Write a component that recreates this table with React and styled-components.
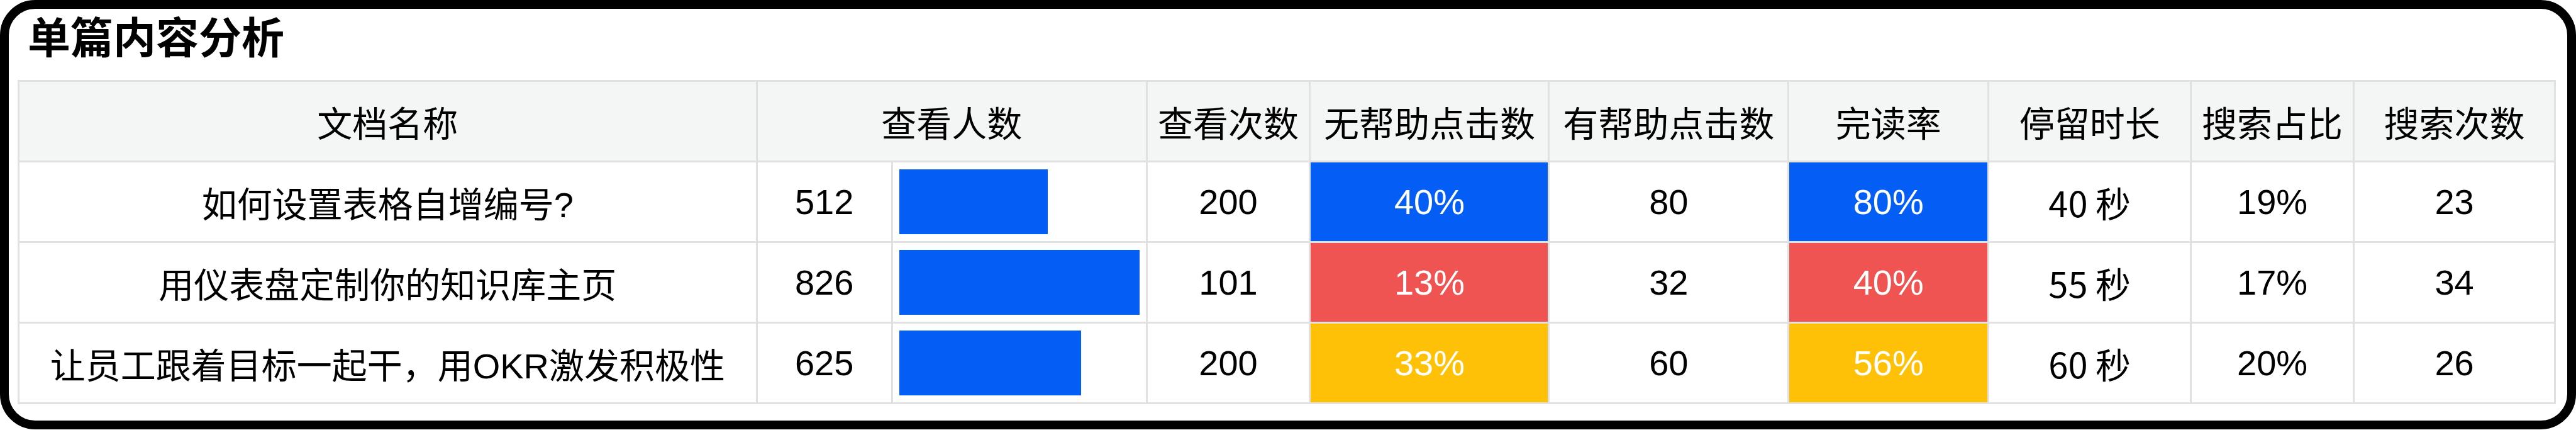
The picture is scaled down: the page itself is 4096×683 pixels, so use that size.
import React from 'react'
import styled, { createGlobalStyle } from 'styled-components'

const GlobalStyle = createGlobalStyle`
  html, body {
    margin: 0;
    padding: 0;
    background: #fff;
  }
  * {
    box-sizing: border-box;
  }
`

const Card = styled.section`
  border: 14px solid #000;
  border-radius: 56px;
  padding: 8px 18px 26px 14px;
  background: #fff;
  color: #000;
  font-family: "Liberation Sans", "Noto Sans CJK SC", sans-serif;
`
const Title = styled.h1`
  margin: 0 0 37px 16px;
  font-family: "Noto Sans CJK SC", sans-serif;
  font-size: 68px;
  line-height: 68px;
  font-weight: 700;
`
const Table = styled.div`
  display: grid;
  grid-template-columns: 1174fr 215fr 405fr 260fr 380fr 381fr 318fr 322fr 259fr 320fr;
  border-top: 3px solid #e1e1e1;
  border-left: 3px solid #e1e1e1;
`
const Cell = styled.div`
  height: 128px;
  display: flex;
  align-items: center;
  justify-content: center;
  border-right: 3px solid #e1e1e1;
  border-bottom: 3px solid #e1e1e1;
  font-size: 56px;
  white-space: nowrap;
  background: ${p => p.$bg || '#fff'};
  color: ${p => (p.$bg ? '#fff' : '#000')};
  font-family: ${p => (p.$cjk ? '"Noto Sans CJK SC", sans-serif' : 'inherit')};
`
const HeadCell = styled(Cell)`
  grid-column: span ${p => p.$span || 1};
  background: #f4f5f5;
  font-family: "Noto Sans CJK SC", sans-serif;
`
const BarCell = styled(Cell)`
  justify-content: flex-start;
  padding: 0 10px;
`
const Bar = styled.div`
  height: 103px;
  background: #045ef5;
`

const BLUE = '#045ef5'
const RED = '#f05452'
const YELLOW = '#fec107'

const headers = [
  ['文档名称', 1],
  ['查看人数', 2],
  ['查看次数', 1],
  ['无帮助点击数', 1],
  ['有帮助点击数', 1],
  ['完读率', 1],
  ['停留时长', 1],
  ['搜索占比', 1],
  ['搜索次数', 1],
]

const rows = [
  { name: '如何设置表格自增编号?', viewers: 512, views: 200, unhelpful: '40%', unhelpfulBg: BLUE, helpful: 80, read: '80%', readBg: BLUE, stay: '40 秒', share: '19%', searches: 23 },
  { name: '用仪表盘定制你的知识库主页', viewers: 826, views: 101, unhelpful: '13%', unhelpfulBg: RED, helpful: 32, read: '40%', readBg: RED, stay: '55 秒', share: '17%', searches: 34 },
  { name: '让员工跟着目标一起干，用OKR激发积极性', viewers: 625, views: 200, unhelpful: '33%', unhelpfulBg: YELLOW, helpful: 60, read: '56%', readBg: YELLOW, stay: '60 秒', share: '20%', searches: 26 },
]

const maxViewers = Math.max(...rows.map(r => r.viewers))

export default function App() {
  return (
    <>
      <GlobalStyle />
      <Card>
        <Title>单篇内容分析</Title>
        <Table>
          {headers.map(([label, span]) => (
            <HeadCell key={label} $span={span}>{label}</HeadCell>
          ))}
          {rows.map(r => (
            <React.Fragment key={r.name}>
              <Cell>{r.name}</Cell>
              <Cell>{r.viewers}</Cell>
              <BarCell>
                <Bar style={{ width: `${(r.viewers / maxViewers) * 100}%` }} />
              </BarCell>
              <Cell>{r.views}</Cell>
              <Cell $bg={r.unhelpfulBg}>{r.unhelpful}</Cell>
              <Cell>{r.helpful}</Cell>
              <Cell $bg={r.readBg}>{r.read}</Cell>
              <Cell $cjk>{r.stay}</Cell>
              <Cell>{r.share}</Cell>
              <Cell>{r.searches}</Cell>
            </React.Fragment>
          ))}
        </Table>
      </Card>
    </>
  )
}
